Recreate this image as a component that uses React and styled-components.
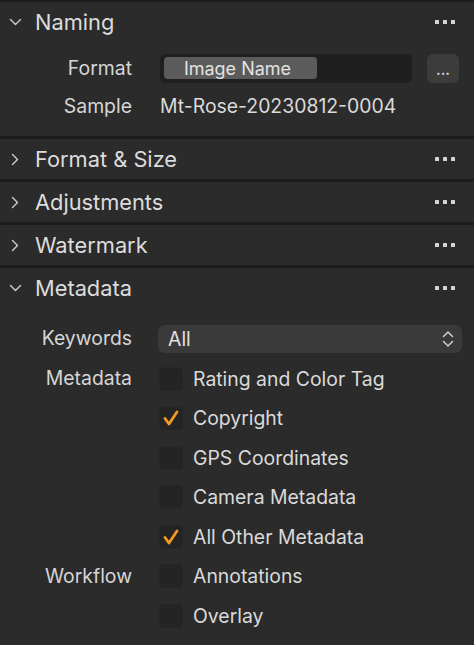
import React from 'react'
import styled, { createGlobalStyle } from 'styled-components'

const GlobalStyle = createGlobalStyle`
  html, body {
    margin: 0;
    padding: 0;
    background: #2b2b2b;
  }
  body {
    font-family: Inter, "Liberation Sans", Arial, sans-serif;
    color: #d9d9d9;
    -webkit-font-smoothing: antialiased;
  }
`

const Panel = styled.div`
  width: 474px;
  height: 645px;
  overflow: hidden;
  background: #2b2b2b;
  display: flex;
  flex-direction: column;
`

const Section = styled.section`
  border-top: ${({ first }) => (first ? '2px' : '3px')} solid #1c1c1c;
  background: #2b2b2b;
`

const Header = styled.div`
  height: 40px;
  display: flex;
  align-items: center;
  padding: 0 19px 0 8px;
`

const Chevron = styled.span`
  width: 14px;
  height: 14px;
  display: flex;
  align-items: center;
  justify-content: center;
  margin-right: 13px;
  color: #cfcfcf;
`

const Title = styled.h2`
  flex: 1;
  margin: 0;
  font-size: 21.8px;
  font-weight: 400;
  color: #dcdcdc;
`

const Dots = styled.div`
  display: flex;
  gap: 4px;
  span {
    width: 4px;
    height: 4px;
    background: #d6d6d6;
    border-radius: 0.5px;
  }
`

const Body = styled.div`
  display: grid;
  grid-template-columns: 132px 1fr;
  column-gap: ${({ gap }) => gap}px;
  padding: ${({ pad }) => pad};
  align-items: center;
`

const Label = styled.div`
  text-align: right;
  font-size: 19.4px;
  color: #d6d6d6;
  height: ${({ h }) => h}px;
  line-height: ${({ h }) => h}px;
  white-space: nowrap;
`

const Cell = styled.div`
  height: ${({ h }) => h}px;
  display: flex;
  align-items: center;
  padding-right: ${({ pr }) => pr || 0}px;
`

const Field = styled.div`
  flex: 1;
  height: 29px;
  background: #1f1f1f;
  border-radius: 5px;
  display: flex;
  align-items: center;
  padding-left: 4px;
`

const Token = styled.div`
  width: 153px;
  height: 22px;
  background: #5b5b5b;
  border-radius: 4px;
  font-size: 18px;
  color: #e2e2e2;
  display: flex;
  align-items: center;
  justify-content: center;
  padding-right: 6px;
  box-sizing: border-box;
`

const MoreButton = styled.div`
  width: 32px;
  height: 29px;
  margin-left: 15px;
  background: #3c3c3c;
  border-radius: 6px;
  font-size: 14px;
  font-weight: 700;
  color: #d0d0d0;
  display: flex;
  align-items: flex-end;
  justify-content: center;
  padding-bottom: 6px;
  box-sizing: border-box;
  line-height: 1;
`

const Value = styled.div`
  font-size: 19.4px;
  color: #dadada;
`

const Select = styled.div`
  flex: 1;
  height: 28px;
  background: #3a3a3a;
  border-radius: 7px;
  display: flex;
  align-items: center;
  justify-content: space-between;
  padding: 0 7px 0 10px;
  font-size: 19.4px;
  color: #e0e0e0;
`

const Check = styled.div`
  width: 22px;
  height: 22px;
  margin-left: 2px;
  margin-right: 11px;
  background: #242424;
  border-radius: 3px;
  box-shadow: 0 0 0 1px #272727;
  display: flex;
  align-items: center;
  justify-content: center;
`

const CheckText = styled.span`
  font-size: 19.4px;
  color: #dadada;
  white-space: nowrap;
`

function SectionHeader({ title, open }) {
  return (
    <Header>
      <Chevron>
        {open ? (
          <svg width="13" height="8" viewBox="0 0 13 8">
            <path d="M1.5 1.5 L6.5 6.5 L11.5 1.5" fill="none" stroke="currentColor" strokeWidth="1.4" strokeLinecap="round" strokeLinejoin="round" />
          </svg>
        ) : (
          <svg width="8" height="13" viewBox="0 0 8 13">
            <path d="M1.5 1.5 L6.5 6.5 L1.5 11.5" fill="none" stroke="currentColor" strokeWidth="1.4" strokeLinecap="round" strokeLinejoin="round" />
          </svg>
        )}
      </Chevron>
      <Title>{title}</Title>
      <Dots>
        <span />
        <span />
        <span />
      </Dots>
    </Header>
  )
}

function Checkbox({ checked }) {
  return (
    <Check>
      {checked && (
        <svg width="18" height="18" viewBox="0 0 18 18">
          <path d="M3 9.5 L7 15 L15 3" fill="none" stroke="#f39a22" strokeWidth="2.8" strokeLinecap="round" strokeLinejoin="round" />
        </svg>
      )}
    </Check>
  )
}

const metadataRows = [
  { label: 'Metadata', text: 'Rating and Color Tag', checked: false },
  { label: '', text: 'Copyright', checked: true },
  { label: '', text: 'GPS Coordinates', checked: false },
  { label: '', text: 'Camera Metadata', checked: false },
  { label: '', text: 'All Other Metadata', checked: true },
  { label: 'Workflow', text: 'Annotations', checked: false },
  { label: '', text: 'Overlay', checked: false },
]

export default function App() {
  return (
    <Panel>
      <GlobalStyle />

      <Section first>
        <SectionHeader title="Naming" open />
        <Body gap={28} pad="7px 0 11px 0">
          <Label h={38}>Format</Label>
          <Cell h={38} pr={15}>
            <Field>
              <Token>Image Name</Token>
            </Field>
            <MoreButton>...</MoreButton>
          </Cell>
          <Label h={38}>Sample</Label>
          <Cell h={38}>
            <Value>Mt-Rose-20230812-0004</Value>
          </Cell>
        </Body>
      </Section>

      <Section>
        <SectionHeader title="Format & Size" />
      </Section>
      <Section>
        <SectionHeader title="Adjustments" />
      </Section>
      <Section>
        <SectionHeader title="Watermark" />
      </Section>

      <Section>
        <SectionHeader title="Metadata" open />
        <Body gap={26} pad="10px 0 0 0">
          <Label h={41}>Keywords</Label>
          <Cell h={41} pr={12}>
            <Select>
              <span>All</span>
              <svg width="14" height="20" viewBox="0 0 14 20">
                <path d="M2.5 7.5 L7 3 L11.5 7.5 M2.5 12.5 L7 17 L11.5 12.5" fill="none" stroke="#cfcfcf" strokeWidth="1.5" strokeLinecap="round" strokeLinejoin="round" />
              </svg>
            </Select>
          </Cell>
          {metadataRows.map((row, i) => (
            <React.Fragment key={i}>
              <Label h={39.5}>{row.label}</Label>
              <Cell h={39.5}>
                <Checkbox checked={row.checked} />
                <CheckText>{row.text}</CheckText>
              </Cell>
            </React.Fragment>
          ))}
        </Body>
      </Section>
    </Panel>
  )
}
